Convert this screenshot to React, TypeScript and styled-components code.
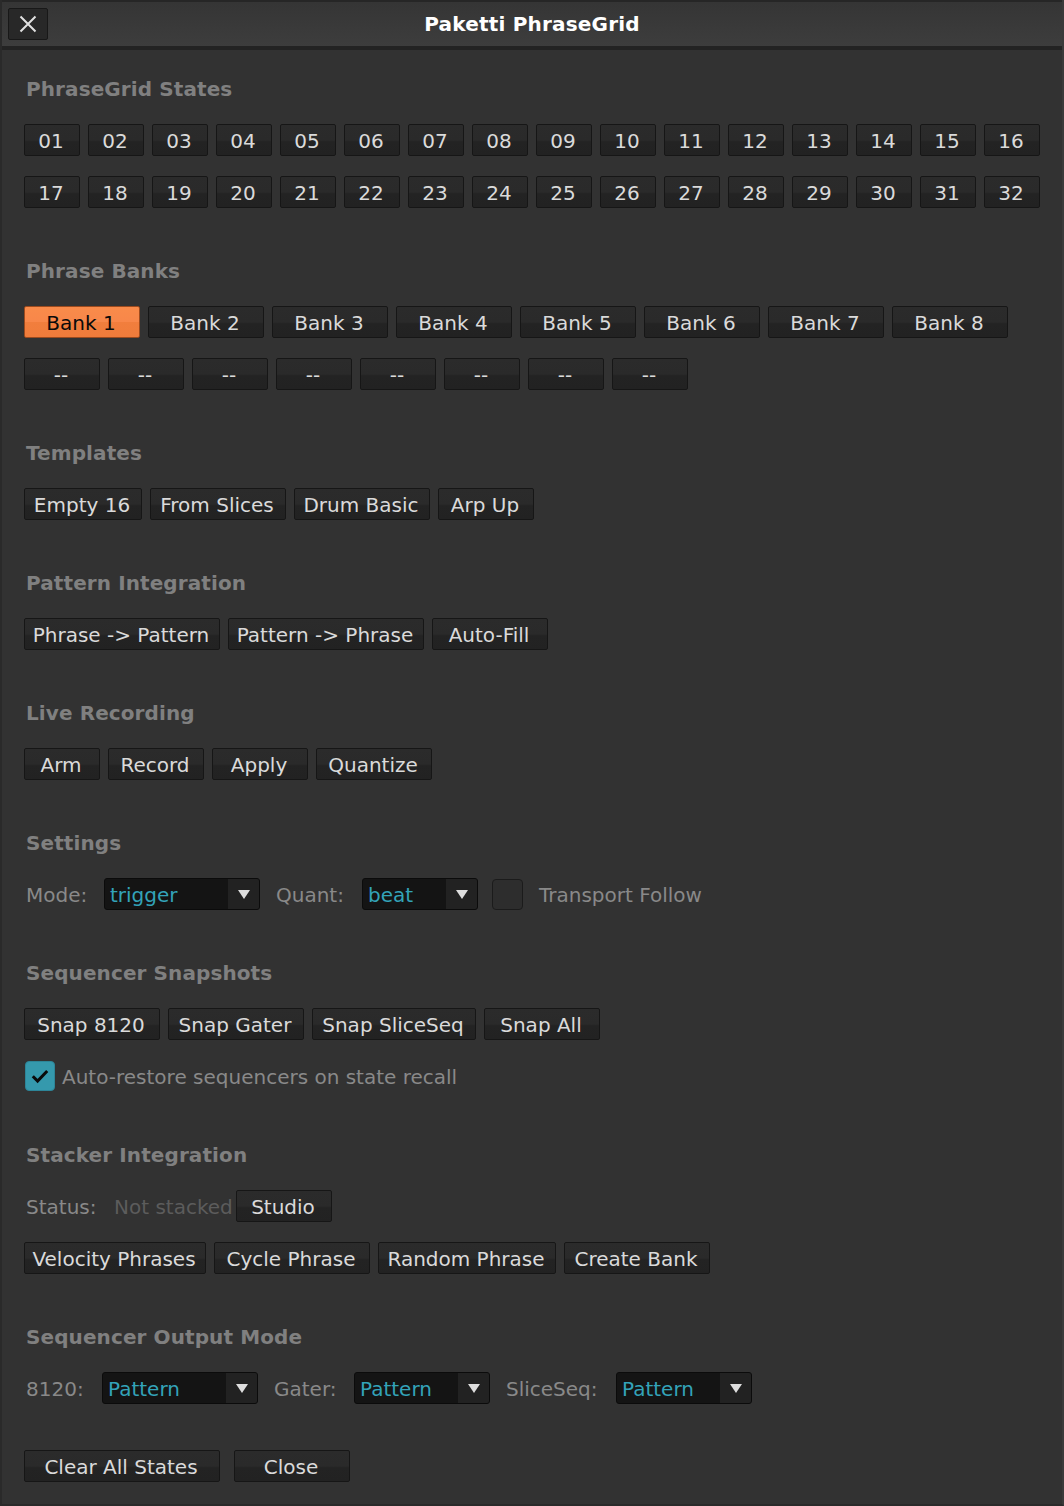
import React from "react";
import styled, { createGlobalStyle } from "styled-components";

const GlobalStyle = createGlobalStyle`
  html, body { margin: 0; padding: 0; background: #313131; }
  body { font-family: "DejaVu Sans", "Liberation Sans", sans-serif; }
  * { box-sizing: border-box; }
`;

const Window = styled.div`
  width: 1064px;
  height: 1506px;
  display: flex;
  flex-direction: column;
  background: #323232;
  border-left: 2px solid #2a2a2a;
  border-right: 2px solid #3a3a3a;
  border-bottom: 2px solid #2a2a2a;
  overflow: hidden;
`;

const TitleBar = styled.div`
  height: 50px;
  flex: none;
  display: grid;
  grid-template-columns: 1fr auto 1fr;
  align-items: center;
  border-top: 2px solid #262626;
  border-bottom: 4px solid #232323;
  background: linear-gradient(#353535, #3d3d3d);
  margin-left: -2px;
  margin-right: -2px;
  padding: 0 8px;
`;

const CloseButton = styled.button`
  width: 40px;
  height: 32px;
  padding: 0;
  display: flex;
  align-items: center;
  justify-content: center;
  background: #282828;
  border: 1px solid #181818;
  border-radius: 2px;
  justify-self: start;
`;

const Title = styled.div`
  color: #ffffff;
  font-weight: bold;
  font-size: 20px;
  letter-spacing: 0.2px;
`;

const Body = styled.div`
  display: flex;
  flex-direction: column;
  padding: 27px 22px 0 22px;
`;

const Section = styled.section`
  display: flex;
  flex-direction: column;
  gap: 20px;
  & + & { margin-top: 51px; }
`;

const Header = styled.div`
  height: 24px;
  line-height: 24px;
  margin-bottom: 3px;
  color: #808080;
  font-weight: bold;
  font-size: 20px;
  letter-spacing: 0.1px;
  padding-left: 2px;
`;

const Row = styled.div<{ $gap?: number }>`
  display: flex;
  align-items: center;
  height: 32px;
  gap: ${(p) => (p.$gap ?? 8)}px;
`;

const Button = styled.button<{ $w: number; $active?: boolean }>`
  width: ${(p) => p.$w}px;
  height: 32px;
  flex: none;
  padding: 1px 2px 0 0;
  font-family: "DejaVu Sans", sans-serif;
  font-size: 20px;
  line-height: 30px;
  text-align: center;
  white-space: nowrap;
  border-radius: 2px;
  color: ${(p) => (p.$active ? "#0a0a0a" : "#dadada")};
  border: 1px solid ${(p) => (p.$active ? "#9c4a1e" : "#161616")};
  background: ${(p) =>
    p.$active
      ? "linear-gradient(#f98b4a 0%, #f8874a 50%, #f17e3d 51%, #f07c3b 100%)"
      : "linear-gradient(#2b2b2b 0%, #2a2a2a 50%, #232323 56%, #222222 100%)"};
`;

const Label = styled.span<{ $w?: number; $dim?: boolean }>`
  ${(p) => (p.$w ? `width: ${p.$w}px;` : "")}
  flex: none;
  font-size: 20px;
  padding-top: 2px;
  color: ${(p) => (p.$dim ? "#5c5c5c" : "#898989")};
  white-space: nowrap;
  padding-left: 2px;
`;

const Select = styled.div<{ $w: number }>`
  width: ${(p) => p.$w}px;
  height: 32px;
  flex: none;
  display: flex;
  border: 1px solid #0b0b0b;
  border-radius: 3px;
  overflow: hidden;
  background: #141414;
`;

const SelectValue = styled.div`
  flex: 1;
  padding: 1px 0 0 5px;
  line-height: 30px;
  font-size: 20px;
  color: #33a3b9;
`;

const SelectArrow = styled.div`
  width: 31px;
  display: flex;
  align-items: center;
  justify-content: center;
  background: #222222;
`;

const Check = styled.div<{ $checked?: boolean }>`
  width: ${(p) => (p.$checked ? 30 : 31)}px;
  height: ${(p) => (p.$checked ? 30 : 31)}px;
  flex: none;
  border-radius: 4px;
  display: flex;
  align-items: center;
  justify-content: center;
  margin-left: ${(p) => (p.$checked ? 1 : 0)}px;
  background: ${(p) => (p.$checked ? "#3599ad" : "#2d2d2d")};
  border: 1px solid ${(p) => (p.$checked ? "#2d8598" : "#1b1b1b")};
`;

const Footer = styled(Row)`
  margin-top: 46px;
`;

const Arrow = () => (
  <svg width="12" height="9" viewBox="0 0 12 9">
    <path d="M0 0 H12 L6 9 Z" fill="#dedede" />
  </svg>
);

const Dropdown = ({ w, value }: { w: number; value: string }) => (
  <Select $w={w}>
    <SelectValue>{value}</SelectValue>
    <SelectArrow>
      <Arrow />
    </SelectArrow>
  </Select>
);

const pad = (n: number) => (n < 10 ? "0" + n : String(n));

export default function App() {
  const row1 = Array.from({ length: 16 }, (_, i) => pad(i + 1));
  const row2 = Array.from({ length: 16 }, (_, i) => pad(i + 17));
  return (
    <>
      <GlobalStyle />
      <Window>
        <TitleBar>
          <CloseButton aria-label="close">
            <svg width="18" height="18" viewBox="0 0 18 18">
              <path d="M1.5 1.5 L16.5 16.5 M16.5 1.5 L1.5 16.5" stroke="#e0e0e0" strokeWidth="2" />
            </svg>
          </CloseButton>
          <Title>Paketti PhraseGrid</Title>
          <span />
        </TitleBar>
        <Body>
          <Section>
            <Header>PhraseGrid States</Header>
            <Row>
              {row1.map((s) => (
                <Button key={s} $w={56}>{s}</Button>
              ))}
            </Row>
            <Row>
              {row2.map((s) => (
                <Button key={s} $w={56}>{s}</Button>
              ))}
            </Row>
          </Section>

          <Section>
            <Header>Phrase Banks</Header>
            <Row>
              {Array.from({ length: 8 }, (_, i) => (
                <Button key={i} $w={116} $active={i === 0}>
                  Bank {i + 1}
                </Button>
              ))}
            </Row>
            <Row>
              {Array.from({ length: 8 }, (_, i) => (
                <Button key={i} $w={76}>--</Button>
              ))}
            </Row>
          </Section>

          <Section>
            <Header>Templates</Header>
            <Row>
              <Button $w={118}>Empty 16</Button>
              <Button $w={136}>From Slices</Button>
              <Button $w={136}>Drum Basic</Button>
              <Button $w={96}>Arp Up</Button>
            </Row>
          </Section>

          <Section>
            <Header>Pattern Integration</Header>
            <Row>
              <Button $w={196}>Phrase -&gt; Pattern</Button>
              <Button $w={196}>Pattern -&gt; Phrase</Button>
              <Button $w={116}>Auto-Fill</Button>
            </Row>
          </Section>

          <Section>
            <Header>Live Recording</Header>
            <Row>
              <Button $w={76}>Arm</Button>
              <Button $w={96}>Record</Button>
              <Button $w={96}>Apply</Button>
              <Button $w={116}>Quantize</Button>
            </Row>
          </Section>

          <Section>
            <Header>Settings</Header>
            <Row $gap={14}>
              <Label $w={66}>Mode:</Label>
              <Dropdown w={156} value="trigger" />
              <Label $w={74}>Quant:</Label>
              <Dropdown w={116} value="beat" />
              <Check />
              <Label>Transport Follow</Label>
            </Row>
          </Section>

          <Section>
            <Header>Sequencer Snapshots</Header>
            <Row>
              <Button $w={136}>Snap 8120</Button>
              <Button $w={136}>Snap Gater</Button>
              <Button $w={164}>Snap SliceSeq</Button>
              <Button $w={116}>Snap All</Button>
            </Row>
            <Row $gap={5}>
              <Check $checked>
                <svg width="18" height="15" viewBox="0 0 18 15">
                  <path d="M1.8 7.2 L6.6 12 L16.2 2" stroke="#0a0a0a" strokeWidth="3" fill="none" />
                </svg>
              </Check>
              <Label>Auto-restore sequencers on state recall</Label>
            </Row>
          </Section>

          <Section>
            <Header>Stacker Integration</Header>
            <Row $gap={0}>
              <Label $w={88}>Status:</Label>
              <Label $w={124} $dim>Not stacked</Label>
              <Button $w={96}>Studio</Button>
            </Row>
            <Row>
              <Button $w={182}>Velocity Phrases</Button>
              <Button $w={156}>Cycle Phrase</Button>
              <Button $w={178}>Random Phrase</Button>
              <Button $w={146}>Create Bank</Button>
            </Row>
          </Section>

          <Section>
            <Header>Sequencer Output Mode</Header>
            <Row $gap={14}>
              <Label $w={64}>8120:</Label>
              <Dropdown w={156} value="Pattern" />
              <Label $w={68}>Gater:</Label>
              <Dropdown w={136} value="Pattern" />
              <Label $w={98}>SliceSeq:</Label>
              <Dropdown w={136} value="Pattern" />
            </Row>
          </Section>

          <Footer $gap={14}>
            <Button $w={196}>Clear All States</Button>
            <Button $w={116}>Close</Button>
          </Footer>
        </Body>
      </Window>
    </>
  );
}
